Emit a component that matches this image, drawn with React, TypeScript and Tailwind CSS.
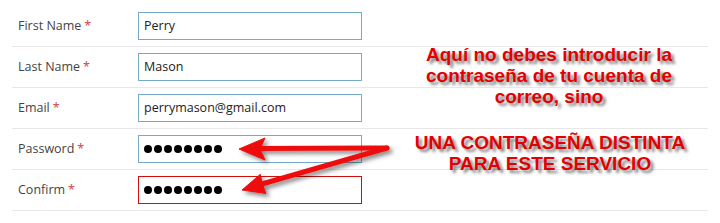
const ROWS = [
  { label: 'First Name', value: 'Perry' },
  { label: 'Last Name', value: 'Mason' },
  { label: 'Email', value: 'perrymason@gmail.com' },
  { label: 'Password', value: '', secret: true },
  { label: 'Confirm', value: '', secret: true, error: true },
]

function Dots() {
  return (
    <div className="flex items-center gap-[2px]">
      {[...Array(8)].map((_, i) => (
        <span key={i} className="w-[8px] h-[8px] rounded-full bg-black" />
      ))}
    </div>
  )
}

function Arrows() {
  return (
    <svg className="absolute inset-0 pointer-events-none" width="720" height="223" viewBox="0 0 720 223">
      <defs>
        <filter id="shadow" x="-10%" y="-50%" width="120%" height="200%">
          <feDropShadow dx="3" dy="3" stdDeviation="2" floodColor="#000" floodOpacity="0.45" />
        </filter>
      </defs>
      <g filter="url(#shadow)" fill="#ee0f0f" stroke="#ee0f0f">
        <line x1="387" y1="148" x2="258" y2="148.5" strokeWidth="5" strokeLinecap="round" />
        <polygon points="239,149 265,138 260,149 265,160" strokeWidth="1" strokeLinejoin="round" />
        <line x1="387" y1="148" x2="262" y2="184" strokeWidth="5" strokeLinecap="round" />
        <polygon points="242,190 260.3,174.3 262.5,184 265.9,193.5" strokeWidth="1" strokeLinejoin="round" />
      </g>
    </svg>
  )
}

const noteStyle = 'absolute w-[320px] text-center font-bold text-[19px] leading-[21px] text-[#e30000] [text-shadow:3px_3px_3px_rgba(0,0,0,0.5)]'

export default function App() {
  return (
    <div className="relative w-[720px] h-[223px] bg-white overflow-hidden" style={{ fontFamily: "'Open Sans', sans-serif" }}>
      <div className="pt-[6px] px-[12px]">
        {ROWS.map((row) => (
          <div key={row.label} className="h-[41px] border-b border-[#e8e8e8] flex items-center">
            <div className="w-[126px] pl-[6px] text-[12.5px] text-[#444]">
              {row.label}
              <span className="text-[#c9414a] ml-[3px]">*</span>
            </div>
            <div
              className={`w-[224px] h-[28px] border flex items-center pl-[5px] text-[12.5px] text-[#222] ${
                row.error ? 'border-[#d01010]' : 'border-[#74a9c8]'
              }`}
            >
              {row.secret ? <Dots /> : row.value}
            </div>
          </div>
        ))}
      </div>

      <Arrows />

      <div className={`${noteStyle} left-[389px] top-[44px]`} style={{ fontFamily: "'Liberation Sans', Arial, sans-serif" }}>
        Aquí no debes introducir la
        <br />
        contraseña de tu cuenta de
        <br />
        correo, sino
      </div>
      <div className={`${noteStyle} left-[390px] top-[132px]`} style={{ fontFamily: "'Liberation Sans', Arial, sans-serif" }}>
        UNA CONTRASEÑA DISTINTA
        <br />
        PARA ESTE SERVICIO
      </div>
    </div>
  )
}
